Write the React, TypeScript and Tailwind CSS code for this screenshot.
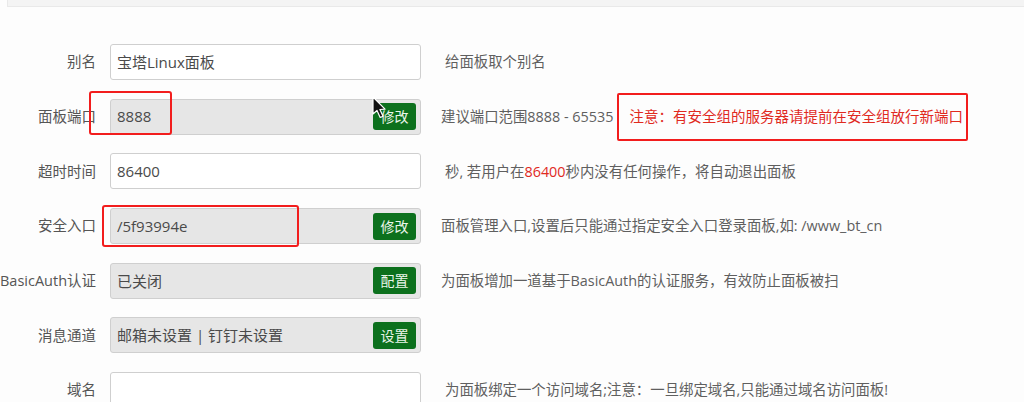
import React from "react";

const font = { fontFamily: '"Open Sans", "Noto Sans CJK SC", sans-serif' };

function Field({
  value,
  gray,
  button,
}: {
  value: string;
  gray?: boolean;
  button?: string;
}) {
  return (
    <div
      className={`relative flex h-[36px] w-[311px] shrink-0 items-center rounded-[3px] border border-[#cfcfcf] pl-[6px] pr-[4px] text-[15px] text-[#4a4a4a] ${
        gray ? "bg-[#e6e6e6]" : "bg-white"
      }`}
    >
      <span className="flex-1 truncate">{value}</span>
      {button && (
        <span className="flex h-[27px] w-[43px] items-center justify-center rounded-[3px] bg-[#0c701d] text-[14px] text-[#eaf5ea]">
          {button}
        </span>
      )}
    </div>
  );
}

function Row({
  label,
  children,
  help,
  helpLeft = "ml-[20px]",
}: {
  label: string;
  children: React.ReactNode;
  help?: React.ReactNode;
  helpLeft?: string;
}) {
  return (
    <div className="flex h-[36px] items-center">
      <div className="w-[96px] shrink-0 whitespace-nowrap text-right text-[14.5px] text-[#555]">
        {label}
      </div>
      <div className="ml-[14px] shrink-0">{children}</div>
      {help && (
        <div className={`${helpLeft} flex items-center whitespace-nowrap text-[14.4px] text-[#5f5f5f]`}>
          {help}
        </div>
      )}
    </div>
  );
}

export default function App() {
  return (
    <div className="h-[402px] w-[1024px] overflow-hidden bg-[#fdfdfd]" style={font}>
      <div className="ml-[7px] h-[7px] border-b border-l border-[#e9e9e9] bg-[#f4f4f4]" />
      <div className="flex flex-col gap-[18.7px] pt-[37px]">
        <Row label="别名" help="给面板取个别名" helpLeft="ml-[24px]">
          <Field value="宝塔Linux面板" />
        </Row>

        <Row
          label="面板端口"
          help={
            <>
              <span>建议端口范围8888 - 65535</span>
              <span className="ml-[3px] flex h-[48px] items-center rounded-[2px] border-2 border-[#f21d1d] pl-[11px] pr-[3px] text-[14.5px] text-[#e02a1f]">
                注意：有安全组的服务器请提前在安全组放行新端口
              </span>
            </>
          }
        >
          <div className="relative">
            <Field value="8888" gray button="修改" />
            <div className="absolute left-[-21px] top-[-8px] h-[44px] w-[83px] rounded-[3px] border-2 border-[#f21d1d]" />
            <svg
              className="absolute left-[262px] top-[-3px]"
              width="16"
              height="24"
              viewBox="0 0 16 24"
            >
              <path
                d="M1 1 L1 18 L5 14.5 L8.2 21.5 L11 20.3 L7.9 13.5 L13 13.2 Z"
                fill="#111"
                stroke="#fff"
                strokeWidth="1.2"
                strokeLinejoin="round"
              />
            </svg>
          </div>
        </Row>

        <Row
          label="超时时间"
          helpLeft="ml-[24px]"
          help={
            <span>
              秒, 若用户在<span className="text-[#e02a1f]">86400</span>秒内没有任何操作，将自动退出面板
            </span>
          }
        >
          <Field value="86400" />
        </Row>

        <Row label="安全入口" help="面板管理入口,设置后只能通过指定安全入口登录面板,如: /www_bt_cn">
          <div className="relative">
            <Field value="/5f93994e" gray button="修改" />
            <div className="absolute left-[-8px] top-[-3px] h-[42px] w-[197px] rounded-[3px] border-2 border-[#f21d1d]" />
          </div>
        </Row>

        <Row label="BasicAuth认证" help="为面板增加一道基于BasicAuth的认证服务，有效防止面板被扫">
          <Field value="已关闭" gray button="配置" />
        </Row>

        <Row label="消息通道">
          <Field value="邮箱未设置 | 钉钉未设置" gray button="设置" />
        </Row>

        <Row
          label="域名"
          helpLeft="ml-[24px]"
          help="为面板绑定一个访问域名;注意：一旦绑定域名,只能通过域名访问面板!"
        >
          <Field value="" />
        </Row>
      </div>
    </div>
  );
}
